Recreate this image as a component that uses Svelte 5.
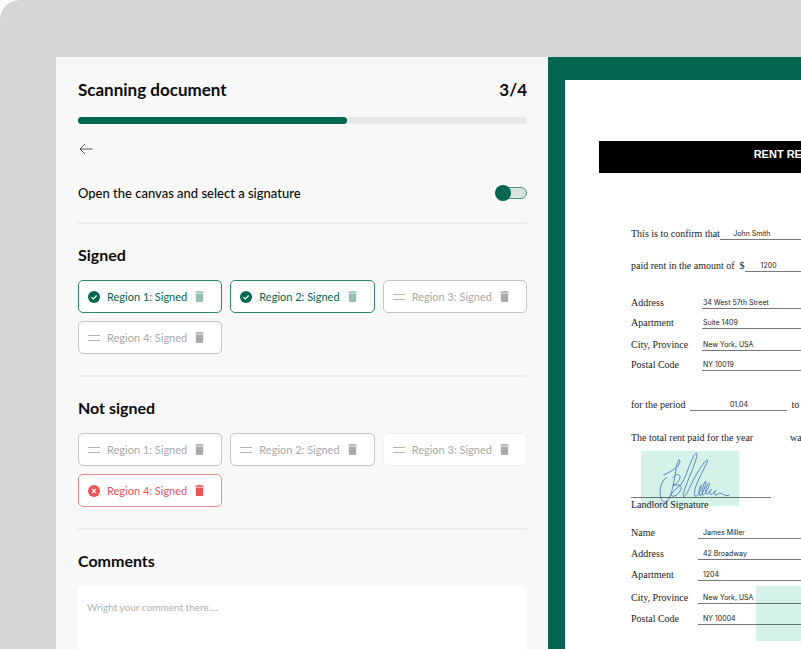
<script lang="ts">
  type Tone = 'idle' | 'valid' | 'invalid' | 'plain';
  type Region = { id: number; tone: Tone };
  type Group = { title: string; regions: Region[] };
  type Field = { label: string; value: string };

  const groups: Group[] = [
    {
      title: 'Signed',
      regions: [
        { id: 1, tone: 'valid' },
        { id: 2, tone: 'valid' },
        { id: 3, tone: 'idle' },
        { id: 4, tone: 'idle' }
      ]
    },
    {
      title: 'Not signed',
      regions: [
        { id: 1, tone: 'idle' },
        { id: 2, tone: 'idle' },
        { id: 3, tone: 'plain' },
        { id: 4, tone: 'invalid' }
      ]
    }
  ];

  const property: Field[] = [
    { label: 'Address', value: '34 West 57th Street' },
    { label: 'Apartment', value: 'Suite 1409' },
    { label: 'City, Province', value: 'New York, USA' },
    { label: 'Postal Code', value: 'NY 10019' }
  ];

  const landlord: Field[] = [
    { label: 'Name', value: 'James Miller' },
    { label: 'Address', value: '42 Broadway' },
    { label: 'Apartment', value: '1204' },
    { label: 'City, Province', value: 'New York, USA' },
    { label: 'Postal Code', value: 'NY 10004' }
  ];

  const progress = 60;

  let canvasOpen = $state(false);
  let comment = $state('');
</script>

{#snippet fields(rows: Field[])}
  {#each rows as row (row.label)}
    <div class="field" class:spaced={row.label === 'City, Province'}>
      <dt>{row.label}</dt>
      <dd>{row.value}</dd>
    </div>
  {/each}
{/snippet}

<div class="desk">
  <main class="workspace">
    <section class="panel" aria-label="Scan review">
      <header class="title-row">
        <h1>Scanning document</h1>
        <span class="step">3/4</span>
      </header>

      <div class="progress" role="progressbar" aria-label="Scan progress" aria-valuenow={progress}>
        <div class="bar" style="width: {progress}%"></div>
      </div>

      <button class="back" type="button" aria-label="Back">
        <svg viewBox="0 0 16 16" width="16" height="16">
          <path d="M14.5 8H2M7 3 2 8l5 5" />
        </svg>
      </button>

      <label class="toggle-row">
        <span>Open the canvas and select a signature</span>
        <input type="checkbox" role="switch" bind:checked={canvasOpen} />
      </label>

      {#each groups as group (group.title)}
        <section class="block">
          <h2>{group.title}</h2>
          <ul class="regions">
            {#each group.regions as region (region.id)}
              <li class="region {region.tone}">
                <svg class="status" viewBox="0 0 12 12" width="12" height="12" aria-hidden="true">
                  {#if region.tone === 'valid'}
                    <circle cx="6" cy="6" r="6" />
                    <path d="m3.5 6.2 1.8 1.8 3.4-3.5" stroke="#fff" stroke-width="1.2" />
                  {:else if region.tone === 'invalid'}
                    <circle cx="6" cy="6" r="6" />
                    <path d="m4 4 4 4M8 4 4 8" stroke="#fff" stroke-width="1.2" />
                  {:else}
                    <path d="M0 3.5h12M0 8.5h12" stroke="#b4b4b4" stroke-width="1.2" />
                  {/if}
                </svg>
                <span>Region {region.id}: Signed</span>
                <button class="remove" type="button" aria-label="Remove region {region.id}">
                  <svg viewBox="5 3 14 18" width="9" height="11">
                    <path d="M6 19c0 1.1.9 2 2 2h8c1.1 0 2-.9 2-2V7H6v12zM19 4h-3.5l-1-1h-5l-1 1H5v2h14V4z" />
                  </svg>
                </button>
              </li>
            {/each}
          </ul>
        </section>
      {/each}

      <section class="block">
        <h2><label for="comment">Comments</label></h2>
        <textarea id="comment" rows="6" placeholder="Wright your comment there...." bind:value={comment}></textarea>
      </section>
    </section>

    <section class="viewer" aria-label="Document preview">
      <article class="paper">
        <h3>RENT RECEIPT</h3>

        <div class="body">
          <p class="line confirm">This is to confirm that <span class="blank name">John Smith</span></p>
          <p class="line amount">paid rent in the amount of &nbsp;$<span class="blank sum">1200</span></p>

          <dl>{@render fields(property)}</dl>

          <p class="line period">for the period <span class="blank date">01.04</span> to</p>
          <p class="line total"><span>The total rent paid for the year</span> was</p>

          <p class="signed-by">Landlord Signature</p>

          <dl class="landlord">{@render fields(landlord)}</dl>
        </div>

        <div class="mark signature">
          <svg viewBox="123 213 294 165" aria-label="Signature" role="img">
            <path
              d="M190 285C205 280 224 268 236 256C241 247 241 240 237 239C229 250 228 276 222 304C216 334 209 360 199 366C186 371 178 351 181 327C183 310 190 298 201 292M218 294C227 281 239 281 240 290C241 301 229 311 218 317C232 313 245 314 244 323C242 336 227 352 216 348C207 343 229 326 242 315C256 296 266 260 276 238C283 222 291 215 291 222C290 240 274 276 263 304C254 327 247 345 251 350C257 350 266 330 275 311C287 284 306 254 318 242C323 237 324 241 320 250C308 275 286 312 283 338C282 352 290 351 297 340C304 328 306 310 302 316C297 324 294 345 300 347C307 348 321 307 317 304C312 303 302 340 308 345C316 347 332 311 327 309C321 310 313 338 320 343C325 345 331 328 335 328C330 330 327 343 333 344C339 344 345 331 347 332C343 335 341 344 348 345C355 344 356 338 362 340C370 342 376 350 389 345"
            />
          </svg>
        </div>
        <div class="mark stamp"></div>
      </article>
    </section>
  </main>
</div>

<style>
  :global(body) {
    margin: 0;
    background: #fff;
  }
  .desk {
    box-sizing: border-box;
    display: flex;
    height: 100vh;
    padding: 57px 0 0 56px;
    overflow: hidden;
    border-top-left-radius: 20px;
    background: #d6d6d6;
    font-family: Lato, 'Liberation Sans', sans-serif;
    color: #0c0c0c;
  }
  h1,
  h2,
  h3,
  p,
  ul,
  dl,
  dd {
    margin: 0;
    padding: 0;
  }
  button {
    display: flex;
    padding: 0;
    border: 0;
    background: none;
    cursor: pointer;
  }
  .workspace {
    display: flex;
    flex: 1;
    min-width: 0;
  }
  .panel {
    box-sizing: border-box;
    flex: 0 0 67%;
    max-width: 492px;
    padding: 21px 21px 0 22px;
    overflow-y: auto;
    scrollbar-width: none;
    background: #f8f8f8;
  }
  .title-row {
    display: flex;
    align-items: center;
    justify-content: space-between;
    line-height: 24px;
  }
  h1,
  .step {
    font-size: 17px;
    font-weight: 700;
  }
  .progress {
    height: 7px;
    margin-top: 15px;
    border-radius: 4px;
    background: #e9e9e9;
  }
  .bar {
    height: 100%;
    border-radius: 4px;
    background: #036650;
  }
  .back {
    margin-top: 17px;
  }
  .back svg {
    fill: none;
    stroke: #50555a;
  }
  .toggle-row {
    display: flex;
    align-items: center;
    justify-content: space-between;
    margin: 27px 0 20px;
    font-size: 13px;
    font-weight: 500;
    line-height: 18px;
  }
  input {
    position: relative;
    appearance: none;
    width: 32px;
    height: 16px;
    margin: 0;
    cursor: pointer;
  }
  input::before {
    content: '';
    position: absolute;
    inset: 2px 0 2px 4px;
    border: 1px solid #4c917f;
    border-radius: 6px;
    background: #d7e4e0;
  }
  input::after {
    content: '';
    position: absolute;
    left: 0;
    width: 16px;
    height: 16px;
    border-radius: 50%;
    background: #036650;
  }
  input:checked::after {
    left: 16px;
  }
  .block {
    padding: 21px 0;
    border-top: 2px solid #ececec;
  }
  h2 {
    margin-bottom: 15px;
    font-size: 16px;
    font-weight: 700;
    line-height: 20px;
  }
  .regions {
    display: grid;
    grid-template-columns: repeat(3, 1fr);
    gap: 8px;
    list-style: none;
  }
  .region {
    display: flex;
    align-items: center;
    gap: 7px;
    padding: 8px 9px;
    border: 1px solid #c4c4c4;
    border-radius: 5px;
    background: #fff;
    color: #a9a9a9;
    font-size: 11px;
    line-height: 15px;
    white-space: nowrap;
  }
  .region.plain {
    border-color: #f0f0f0;
  }
  .region.valid {
    border-color: #2f826f;
    color: #036650;
  }
  .region.invalid {
    border-color: #f08a8e;
    color: #ea5459;
  }
  .status {
    flex: none;
    fill: none;
  }
  .status circle,
  .remove svg {
    fill: currentColor;
  }
  .remove {
    margin-left: 1px;
    color: inherit;
  }
  .valid .remove {
    color: #93bfb4;
  }
  textarea {
    box-sizing: border-box;
    display: block;
    width: 100%;
    padding: 14px 9px;
    border: 0;
    border-radius: 5px;
    background: #fff;
    font-family: inherit;
    font-size: 10px;
    line-height: 14px;
    resize: none;
  }
  textarea::placeholder {
    color: #b0b0b0;
  }
  .viewer {
    flex: 1;
    min-width: 0;
    padding: 23px 0 0 17px;
    overflow: hidden;
    background: #036650;
  }
  .paper {
    box-sizing: border-box;
    position: relative;
    width: 464px;
    min-height: 100%;
    padding-top: 61px;
    background: #fff;
    color: #222;
    font-family: 'Liberation Serif', serif;
    font-size: 10px;
    line-height: 10px;
  }
  h3 {
    margin: 0 40px 0 34px;
    padding-bottom: 5px;
    background: #000;
    color: #fff;
    font-family: 'Liberation Sans', sans-serif;
    font-size: 11px;
    line-height: 27px;
    text-align: center;
  }
  .body {
    padding: 56px 40px 0 66px;
  }
  .line {
    display: flex;
    white-space: nowrap;
  }
  .blank,
  dd {
    border-bottom: 1px solid #777;
    font-family: Inter, 'Liberation Sans', sans-serif;
    font-size: 7px;
  }
  .blank {
    text-align: center;
  }
  .name {
    width: 64px;
    padding-right: 120px;
  }
  .amount {
    margin-top: 21px;
  }
  .sum {
    width: 48px;
    padding-right: 120px;
  }
  .amount + dl {
    margin-top: 17px;
  }
  .field {
    display: flex;
    padding-top: 9px;
  }
  .field.spaced {
    margin-top: 2px;
  }
  dt {
    width: 71px;
  }
  dd {
    flex: 1;
    padding-left: 1px;
  }
  .landlord {
    margin-top: 7px;
  }
  .landlord .field {
    padding-top: 10px;
  }
  .landlord dt {
    width: 67px;
  }
  .landlord dd {
    padding-left: 5px;
  }
  .period {
    margin-top: 29px;
  }
  .date {
    width: 97px;
    margin: 0 4px 0 5px;
  }
  .total {
    margin-top: 22px;
  }
  .total span {
    width: 159px;
  }
  .signed-by {
    width: 140px;
    margin-top: 54px;
    border-top: 1px solid #777;
    line-height: 13px;
  }
  /* Detected regions laid over the scanned page. */
  .mark {
    position: absolute;
    width: 98px;
    height: 55px;
    background: #d4f2ea;
    mix-blend-mode: multiply;
  }
  .signature {
    top: 371px;
    left: 76px;
  }
  .signature svg {
    display: block;
    fill: none;
    stroke: #5f83bf;
    stroke-width: 3;
    stroke-linejoin: round;
  }
  .stamp {
    top: 506px;
    left: 191px;
  }
</style>
